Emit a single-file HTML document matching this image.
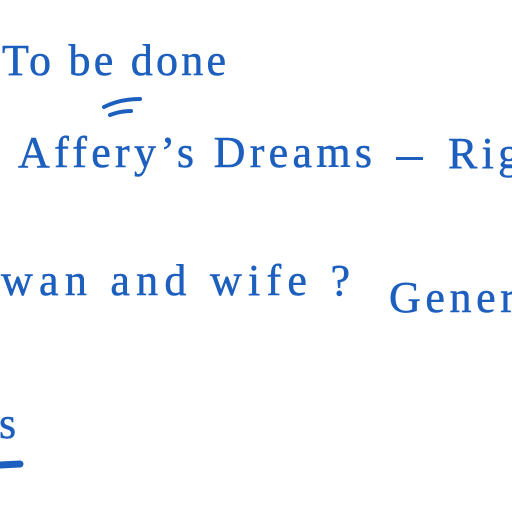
<!DOCTYPE html>
<html><head><meta charset="utf-8"><style>
html,body{margin:0;padding:0;background:#fff;width:512px;height:512px;overflow:hidden}
svg{display:block}
text{font-family:"Liberation Serif",serif;fill:#1d5fbe;stroke:#1d5fbe;stroke-width:0.5;font-size:44px}
</style></head><body>
<svg width="512" height="512" viewBox="0 0 512 512">
<text x="2" y="75" textLength="224" lengthAdjust="spacing">To be done</text>
<path d="M104 107 Q120 99 140 99" stroke="#1d5fbe" stroke-width="4" fill="none" stroke-linecap="round"/>
<path d="M110 115 Q120 111 131 111" stroke="#1d5fbe" stroke-width="4" fill="none" stroke-linecap="round"/>
<text x="18" y="167" textLength="354" lengthAdjust="spacing">Affery’s Dreams</text>
<rect x="396" y="157" width="27" height="3" fill="#1d5fbe"/>
<text x="448" y="168" textLength="115" lengthAdjust="spacing">Right</text>
<text x="1" y="295" textLength="349" lengthAdjust="spacing">wan and wife ?</text>
<text x="389" y="312" textLength="150" lengthAdjust="spacing">Genera</text>
<text x="-1" y="438">s</text>
<path d="M0 465 L20 464" stroke="#1d5fbe" stroke-width="7" stroke-linecap="round"/>
</svg>
</body></html>
